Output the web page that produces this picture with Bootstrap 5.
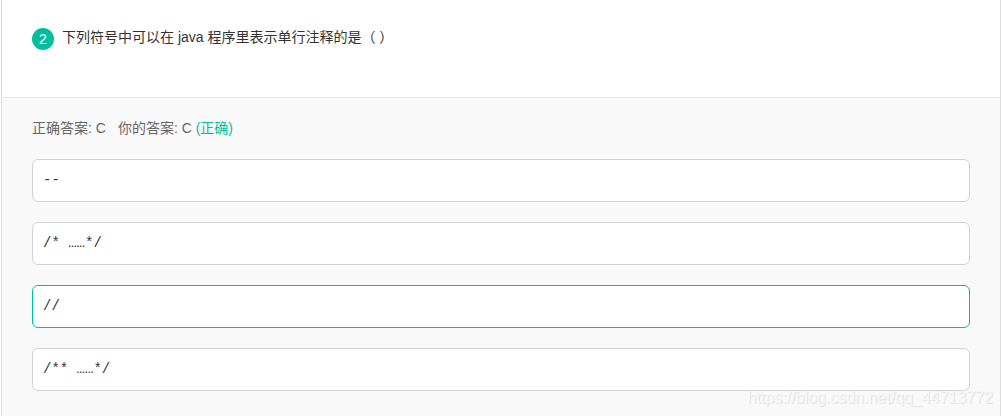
<!DOCTYPE html>
<html lang="zh-CN">
<head>
<meta charset="utf-8">
<meta name="viewport" content="width=device-width, initial-scale=1">
<title>单行注释</title>
<link href="https://cdn.jsdelivr.net/npm/bootstrap@5.3.0/dist/css/bootstrap.min.css" rel="stylesheet">
<style>
  body { font: 14px/22px "Liberation Sans", "Noto Sans CJK SC", sans-serif; color: #333; }
  .question-panel { margin-left: 1px; border: solid #ddd; border-width: 0 1px; }
  .question-head { padding: 26px 30px 47px; border-bottom: 1px solid #e8e8e8; }
  .question-no { width: 22px; height: 22px; margin-top: 2px; background: #00bf9f; }
  .question-title { font-size: 14px; line-height: 22px; }
  .answer-area { padding: 19px 30px 24px; background: #f9f9f9; }
  .answer-line { color: #666; }
  .accent { color: #00bf9f; }
  .answer-list { gap: 20px; margin-top: 20px; }
  .answer-option { padding: 9px 10px 10px; background: #fff; border: 1px solid #d2d2d2; border-radius: 6px; font-family: "Liberation Mono", "Noto Sans CJK SC", monospace; white-space: pre; }
  .answer-option.chosen { border-color: #00bf9f; }
  .watermark { right: 7px; bottom: 8px; font-size: 16px; line-height: 20px; color: #f6f6f6; text-shadow: 1px 1px 0 #e4e4e4; }
</style>
</head>
<body>
<main class="question-panel min-vh-100 d-flex flex-column position-relative">
  <header class="question-head d-flex align-items-start gap-2">
    <span class="question-no rounded-circle text-white d-flex align-items-center justify-content-center flex-shrink-0">2</span>
    <h1 class="question-title fw-normal mb-0">下列符号中可以在 java 程序里表示单行注释的是（ ）</h1>
  </header>
  <section class="answer-area flex-grow-1">
    <p class="answer-line d-flex mb-0"><span class="me-2 pe-1">正确答案: C</span><span>你的答案: C <span class="accent">(正确)</span></span></p>
    <ul class="answer-list list-unstyled d-grid mb-0">
      <li class="answer-option">--</li>
      <li class="answer-option">/* ……*/</li>
      <li class="answer-option chosen">//</li>
      <li class="answer-option">/** ……*/</li>
    </ul>
  </section>
  <div class="watermark position-absolute">https://blog.csdn.net/qq_44713772</div>
</main>
<script src="https://cdn.jsdelivr.net/npm/bootstrap@5.3.0/dist/js/bootstrap.bundle.min.js"></script>
</body>
</html>
